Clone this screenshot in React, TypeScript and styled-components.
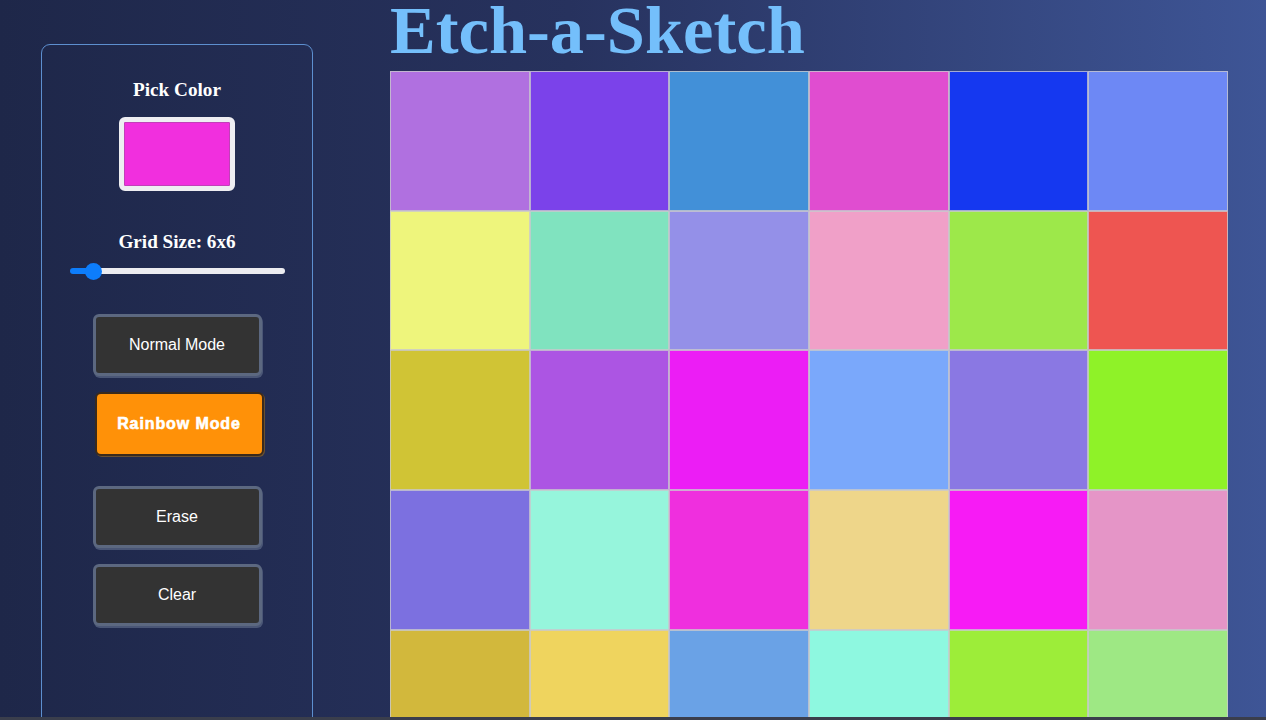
import React, { useState } from "react";
import styled, { createGlobalStyle } from "styled-components";

const Global = createGlobalStyle`
  html { background: #3a3e4c; }
  body {
    margin: 0;
    height: 717px;
    overflow: hidden;
    background: linear-gradient(90deg, #1e2749 0%, #27325e 45%, #3e5596 100%);
  }
  #root { height: 100%; }
`;

const Page = styled.div`
  display: flex;
  align-items: flex-start;
  height: 100%;
  padding-left: 41px;
  box-sizing: border-box;
`;

const Sidebar = styled.aside`
  margin-top: 44px;
  width: 272px;
  height: 720px;
  box-sizing: border-box;
  border: 1px solid #5d8fcf;
  border-radius: 9px;
  display: flex;
  flex-direction: column;
  align-items: center;
  padding-top: 34px;
  flex-shrink: 0;
`;

const Label = styled.div<{ $mt?: number }>`
  font-family: "Liberation Serif", "Times New Roman", serif;
  font-weight: bold;
  font-size: 19.2px;
  line-height: 22px;
  color: #ffffff;
  margin-top: ${(p) => p.$mt ?? 0}px;
`;

const Swatch = styled.div<{ $color: string }>`
  margin-top: 16px;
  width: 116px;
  height: 74px;
  box-sizing: border-box;
  border: 5px solid #eeeef2;
  border-radius: 6px;
  background: ${(p) => p.$color};
  box-shadow: inset 0 0 0 1px #c23fb9;
`;

const Range = styled.input`
  -webkit-appearance: none;
  appearance: none;
  margin: 15px 0 0;
  width: 215px;
  height: 6px;
  border-radius: 3px;
  outline: none;
  &::-webkit-slider-thumb {
    -webkit-appearance: none;
    appearance: none;
    width: 17px;
    height: 17px;
    border-radius: 50%;
    background: #0d7dfb;
    border: none;
  }
`;

const Button = styled.button<{ $active?: boolean; $mt: number; $dx?: number }>`
  margin-top: ${(p) => p.$mt}px;
  transform: translateX(${(p) => p.$dx ?? 0}px);
  width: 169px;
  height: ${(p) => (p.$active ? 64 : 62)}px;
  border-radius: 6px;
  font-family: "Liberation Sans", Arial, sans-serif;
  font-size: 16px;
  font-weight: ${(p) => (p.$active ? "bold" : "normal")};
  letter-spacing: ${(p) => (p.$active ? "0.9px" : "0")};
  -webkit-text-stroke: ${(p) => (p.$active ? "0.6px #ffffff" : "0")};
  color: #ffffff;
  background: ${(p) => (p.$active ? "#ff9108" : "#333333")};
  border: ${(p) => (p.$active ? "2px solid #3a2a1c" : "3px solid #5c6880")};
  box-shadow: ${(p) => (p.$active ? "1px 1px 0 #6a5030" : "1px 2px 0 #4a5676")};
  cursor: pointer;
`;

const Main = styled.main`
  margin-left: 77px;
  display: flex;
  flex-direction: column;
`;

const Title = styled.h1`
  margin: 0;
  font-family: "Liberation Serif", "Times New Roman", serif;
  font-weight: bold;
  font-size: 68.5px;
  line-height: 60px;
  color: #74bffb;
  white-space: nowrap;
`;

const Grid = styled.div`
  margin-top: 11px;
  width: 838px;
  display: grid;
  grid-template-columns: repeat(6, 1fr);
`;

const Cell = styled.div<{ $c: string }>`
  aspect-ratio: 1;
  box-sizing: border-box;
  border: 1px solid rgba(200, 200, 205, 0.8);
  background: ${(p) => p.$c};
`;

const colors = [
  "#b070e0", "#7b42ea", "#4290d8", "#e04dd0", "#1538f0", "#6d88f5",
  "#eef57c", "#80e3bf", "#9490e8", "#f0a0c8", "#9de84a", "#ee5551",
  "#d0c435", "#ac55e3", "#ec1df5", "#7aa8fb", "#8a78e3", "#8ff228",
  "#7c70e0", "#96f5dc", "#ef2fde", "#eed68a", "#f71bf5", "#e595c7",
  "#d2b83c", "#efd45e", "#6aa2e6", "#8ef8e0", "#9ded39", "#9ee884",
  "#88e0a0", "#d0a0f0", "#60c0e0", "#f0c070", "#a080f0", "#70e070",
];

export default function App() {
  const [size, setSize] = useState(6);
  const pct = ((size - 1) / 63) * 100;
  return (
    <>
      <Global />
      <Page>
        <Sidebar>
          <Label>Pick Color</Label>
          <Swatch $color="#f12fde" />
          <Label $mt={40}>Grid Size: {size}x{size}</Label>
          <Range
            type="range"
            min={1}
            max={64}
            value={size}
            onChange={(e) => setSize(Number(e.target.value))}
            style={{
              background: `linear-gradient(90deg, #0d7dfb 0%, #0d7dfb ${pct}%, #ececf0 ${pct}%, #ececf0 100%)`,
            }}
          />
          <Button $mt={40}>Normal Mode</Button>
          <Button $mt={16} $dx={2} $active>
            Rainbow Mode
          </Button>
          <Button $mt={30}>Erase</Button>
          <Button $mt={16}>Clear</Button>
        </Sidebar>
        <Main>
          <Title>Etch-a-Sketch</Title>
          <Grid>
            {colors.map((c, i) => (
              <Cell key={i} $c={c} />
            ))}
          </Grid>
        </Main>
      </Page>
    </>
  );
}
